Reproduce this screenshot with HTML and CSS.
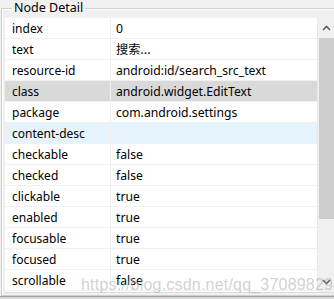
FILE: index.html
```html
<!DOCTYPE html>
<html lang="en">
<head>
    <meta charset="UTF-8">
    <meta name="viewport" content="width=device-width, initial-scale=1.0">
    <title>Node Detail</title>
    <link rel="stylesheet" href="styles.css">
</head>
<body>
    <fieldset class="node-detail">
        <legend>Node Detail</legend>
        <div class="table-wrap">
            <div class="rows">
                <div class="row"><span class="key">index</span><span class="val">0</span></div>
                <div class="row"><span class="key">text</span><span class="val cjk">搜索...</span></div>
                <div class="row"><span class="key">resource-id</span><span class="val">android:id/search_src_text</span></div>
                <div class="row selected"><span class="key">class</span><span class="val">android.widget.EditText</span></div>
                <div class="row"><span class="key">package</span><span class="val">com.android.settings</span></div>
                <div class="row hover"><span class="key">content-desc</span><span class="val"></span></div>
                <div class="row"><span class="key">checkable</span><span class="val">false</span></div>
                <div class="row"><span class="key">checked</span><span class="val">false</span></div>
                <div class="row"><span class="key">clickable</span><span class="val">true</span></div>
                <div class="row"><span class="key">enabled</span><span class="val">true</span></div>
                <div class="row"><span class="key">focusable</span><span class="val">true</span></div>
                <div class="row"><span class="key">focused</span><span class="val">true</span></div>
                <div class="row"><span class="key">scrollable</span><span class="val">false</span></div>
                <div class="row last"><span class="key"></span><span class="val"></span></div>
            </div>
            <div class="scrollbar">
                <div class="arrow">
                    <svg width="9" height="6" viewBox="0 0 9 6"><path d="M1 5 L4.5 1.5 L8 5" fill="none" stroke="#606060" stroke-width="1.6"/></svg>
                </div>
                <div class="thumb"></div>
                <div class="track"></div>
                <div class="arrow">
                    <svg width="9" height="6" viewBox="0 0 9 6"><path d="M1 1 L4.5 4.5 L8 1" fill="none" stroke="#606060" stroke-width="1.6"/></svg>
                </div>
            </div>
        </div>
        <span class="watermark">https://blog.csdn.net/qq_37089829</span>
    </fieldset>
    <div class="bottom-bar"></div>
</body>
</html>
```
FILE: styles.css
```css
* {
    margin: 0;
    padding: 0;
    box-sizing: border-box;
}

body {
    width: 334px;
    height: 299px;
    overflow: hidden;
    background: #f0f0f0;
    font-family: 'Noto Sans', 'Noto Sans CJK SC', sans-serif;
    font-size: 12px;
    color: #000;
}

.node-detail {
    position: relative;
    width: 352px;
    height: 296px;
    margin-left: 1px;
    padding: 1px 0 0 3px;
    border: 1px solid #d0d0d0;
    box-shadow: inset 1px 1px 0 #fff;
}

.node-detail legend {
    margin-left: 7px;
    padding: 0 2px;
    height: 17px;
    line-height: 15px;
    font-size: 12.5px;
}

.table-wrap {
    display: flex;
    height: 275px;
    border-bottom: 1px solid #dcdcdc;
}

.rows {
    width: 313px;
    background: #fff;
    border-right: 1px solid #e3e9f0;
}

.row {
    display: flex;
    height: 21px;
    line-height: 21px;
    border-bottom: 1px solid #f0f0f0;
}

.row.last {
    height: 2px;
    border-bottom: none;
}

.row.selected {
    background: #d9d9d9;
}

.row.hover {
    background: #e5f3fd;
}

.key {
    width: 106px;
    padding-left: 7px;
    border-right: 1px solid #f0f0f0;
}

.val {
    flex: 1;
    padding-left: 5px;
    font-size: 12.2px;
}

.cjk {
    font-family: 'Noto Sans CJK SC', sans-serif;
}

.scrollbar {
    display: flex;
    flex-direction: column;
    width: 17px;
    background: #f0f0f0;
}

.arrow {
    display: flex;
    align-items: center;
    justify-content: center;
    height: 20px;
}

.thumb {
    height: 181px;
    margin: 0 1px 0 1px;
    background: #cdcdcd;
}

.track {
    flex: 1;
}

.watermark {
    position: absolute;
    left: 79px;
    top: 259px;
    font-family: 'Liberation Sans', sans-serif;
    font-size: 16px;
    color: rgba(170, 170, 170, 0.55);
    letter-spacing: 0.2px;
}

.bottom-bar {
    height: 3px;
    border-top: 1px solid #a0a0a0;
    background: #d8d8d8;
}
```
